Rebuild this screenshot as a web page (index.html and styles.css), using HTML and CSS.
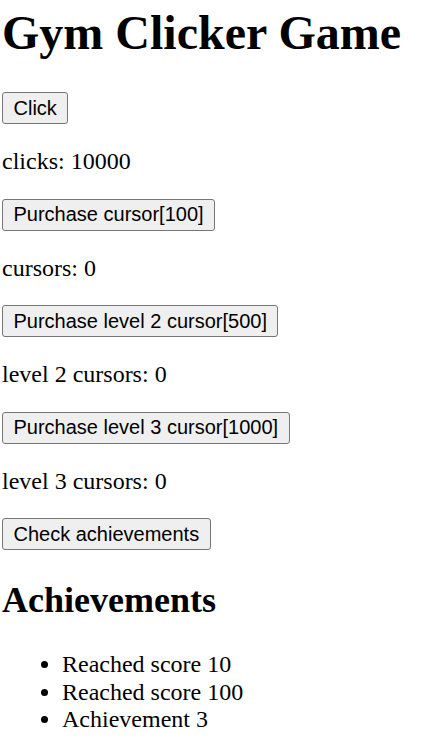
FILE: index.html
```html
<!DOCTYPE html>
<html lang="en">
<head>
<meta charset="utf-8">
<title>Gym Clicker Game</title>
<link rel="stylesheet" href="styles.css">
</head>
<body>
<h1 class="title">Gym Clicker Game</h1>
<button class="btn">Click</button>
<p class="stat">clicks: 10000</p>
<button class="btn">Purchase cursor[100]</button>
<p class="stat">cursors: 0</p>
<button class="btn">Purchase level 2 cursor[500]</button>
<p class="stat">level 2 cursors: 0</p>
<button class="btn">Purchase level 3 cursor[1000]</button>
<p class="stat">level 3 cursors: 0</p>
<button class="btn">Check achievements</button>
<h2 class="subtitle">Achievements</h2>
<ul class="list">
  <li>Reached score 10</li>
  <li>Reached score 100</li>
  <li>Achievement 3</li>
</ul>
</body>
</html>
```

FILE: styles.css
```css
html, body {
  background: #ffffff;
}
body {
  margin: 0;
  padding: 0 0 0 2px;
  font-family: "Liberation Serif", "Times New Roman", serif;
  font-size: 24px;
  color: #000000;
}
.title {
  font-size: 48px;
  font-weight: bold;
  margin: 5px 0 32px;
}
.btn {
  display: block;
  box-sizing: border-box;
  height: 32px;
  font-family: "Liberation Sans", Arial, sans-serif;
  font-size: 20px;
  line-height: 23px;
  color: #000000;
  background: #efefef;
  border: 1.5px solid #767676;
  border-radius: 3px;
  padding: 3px 10.5px;
  margin: 0;
}
.stat {
  margin: 24px 0;
  line-height: 26.5px;
}
.subtitle {
  font-size: 36px;
  font-weight: bold;
  margin: 29px 0 30px;
}
.list {
  margin: 30px 0 24px;
  padding-left: 60px;
  line-height: 27.5px;
}
```
